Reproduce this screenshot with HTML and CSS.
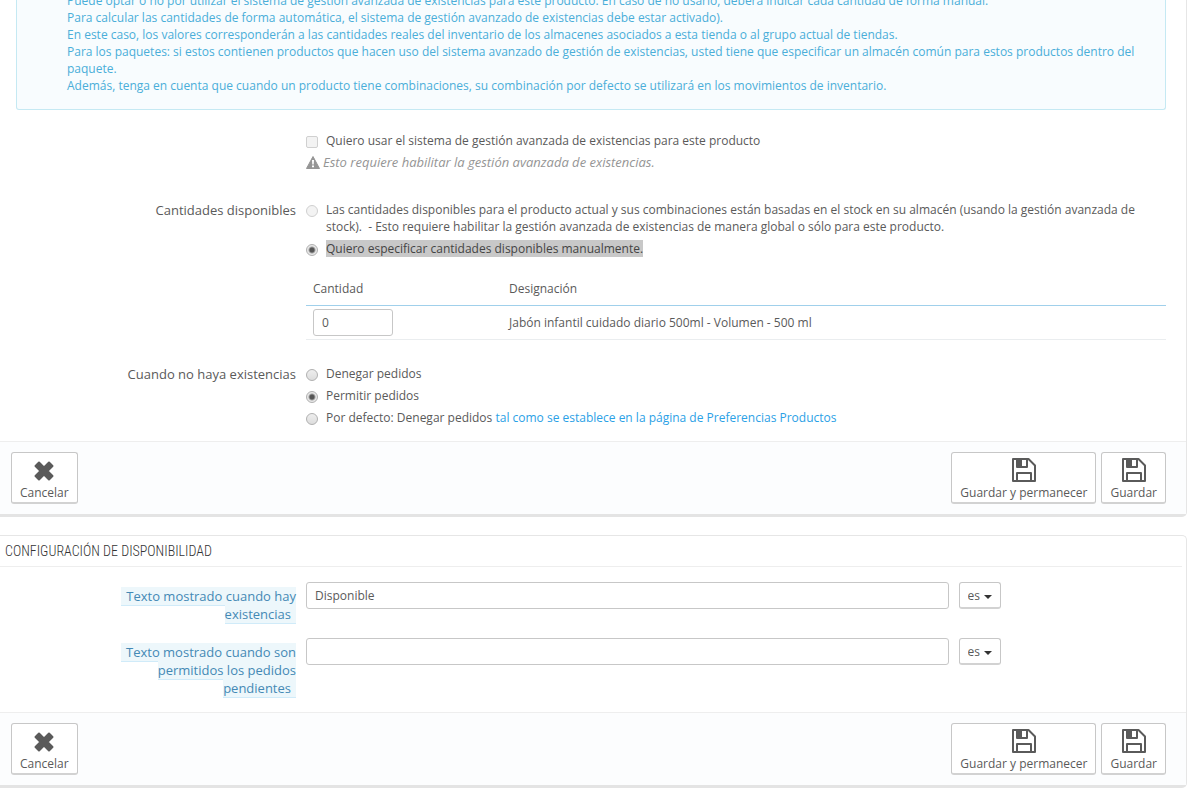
FILE: index.html
```html
<!DOCTYPE html>
<html lang="es">
<head>
    <meta charset="UTF-8">
    <meta name="viewport" content="width=device-width, initial-scale=1.0">
    <title>Cantidades</title>
    <link rel="stylesheet" href="styles.css">
</head>
<body>
    <svg class="sprite" aria-hidden="true">
        <symbol id="icon-cancel" viewBox="0 0 20 20">
            <path d="M5 1.500 L10 6.500 L15 1.500 L18.500 5 L13.500 10 L18.500 15 L15 18.500 L10 13.500 L5 18.500 L1.500 15 L6.500 10 L1.500 5 Z" fill="currentColor" stroke="currentColor" stroke-width="2" stroke-linejoin="round"/>
        </symbol>
        <symbol id="icon-save" viewBox="0 0 24 24">
            <path d="M1 1 H16.5 L23 7.500 V23 H1 Z" fill="none" stroke="currentColor" stroke-width="2" stroke-linejoin="round"/>
            <path d="M5 1 V9 H15 V1" fill="none" stroke="currentColor" stroke-width="2" stroke-linejoin="round"/>
            <path d="M5 1 H10 V9 H5 Z" fill="currentColor"/>
            <path d="M5 23 V15 H19 V23" fill="none" stroke="currentColor" stroke-width="2" stroke-linejoin="round"/>
        </symbol>
    </svg>

    <form class="panel panel-first">
        <div class="panel-body">
            <div class="alert">
                Puede optar o no por utilizar el sistema de gestión avanzada de existencias para este producto. En caso de no usarlo, deberá indicar cada cantidad de forma manual.<br>
                Para calcular las cantidades de forma automática, el sistema de gestión avanzado de existencias debe estar activado).<br>
                En este caso, los valores corresponderán a las cantidades reales del inventario de los almacenes asociados a esta tienda o al grupo actual de tiendas.<br>
                Para los paquetes: si estos contienen productos que hacen uso del sistema avanzado de gestión de existencias, usted tiene que especificar un almacén común para estos productos dentro del paquete.<br>
                Además, tenga en cuenta que cuando un producto tiene combinaciones, su combinación por defecto se utilizará en los movimientos de inventario.
            </div>

            <div class="form-group">
                <div class="field field-offset">
                    <label class="option">
                        <input type="checkbox" disabled>
                        <span>Quiero usar el sistema de gestión avanzada de existencias para este producto</span>
                    </label>
                    <p class="help">
                        <svg class="icon-warning" viewBox="0 0 14 13" aria-hidden="true">
                            <path d="M7 0.500 L13.500 12.500 H0.500 Z" fill="currentColor" stroke="currentColor" stroke-linejoin="round"/>
                            <path d="M6 4 H8 L7.700 8.500 H6.300 Z M6 9.500 H8 V11.300 H6 Z" fill="#fff"/>
                        </svg>
                        Esto requiere habilitar la gestión avanzada de existencias.
                    </p>
                </div>
            </div>

            <div class="form-group" role="radiogroup" aria-labelledby="lblCantidades">
                <span class="control-label" id="lblCantidades">Cantidades disponibles</span>
                <div class="field">
                    <label class="option">
                        <input type="radio" name="depends" disabled>
                        <span>Las cantidades disponibles para el producto actual y sus combinaciones están basadas en el stock en su almacén (usando la gestión avanzada de stock). &nbsp;- Esto requiere habilitar la gestión avanzada de existencias de manera global o sólo para este producto.</span>
                    </label>
                    <label class="option">
                        <input type="radio" name="depends" checked>
                        <span class="selected">Quiero especificar cantidades disponibles manualmente.</span>
                    </label>
                </div>
            </div>

            <div class="form-group">
                <div class="field field-offset">
                    <table class="table">
                        <thead>
                            <tr>
                                <th class="col-qty">Cantidad</th>
                                <th>Designación</th>
                            </tr>
                        </thead>
                        <tbody>
                            <tr>
                                <td><input class="form-control qty" type="text" value="0" aria-label="Cantidad"></td>
                                <td>Jabón infantil cuidado diario 500ml - Volumen - 500 ml</td>
                            </tr>
                        </tbody>
                    </table>
                </div>
            </div>

            <div class="form-group" role="radiogroup" aria-labelledby="lblExistencias">
                <span class="control-label" id="lblExistencias">Cuando no haya existencias</span>
                <div class="field">
                    <label class="option">
                        <input type="radio" name="stock">
                        <span>Denegar pedidos</span>
                    </label>
                    <label class="option">
                        <input type="radio" name="stock" checked>
                        <span>Permitir pedidos</span>
                    </label>
                    <label class="option">
                        <input type="radio" name="stock">
                        <span>Por defecto: Denegar pedidos <a href="#">tal como se establece en la página de Preferencias Productos</a></span>
                    </label>
                </div>
            </div>
        </div>

        <div class="panel-footer">
            <button type="button" class="btn btn-cancel"><svg><use href="#icon-cancel"/></svg>Cancelar</button>
            <button type="button" class="btn btn-save"><svg><use href="#icon-save"/></svg>Guardar y permanecer</button>
            <button type="button" class="btn btn-save"><svg><use href="#icon-save"/></svg>Guardar</button>
        </div>
    </form>

    <form class="panel">
        <h3>Configuración de disponibilidad</h3>
        <div class="panel-body">
            <div class="form-group">
                <label class="control-label label-narrow" for="textoStock"><span class="tooltip">Texto mostrado cuando hay existencias</span></label>
                <div class="field lang-row">
                    <input class="form-control" id="textoStock" type="text" value="Disponible">
                    <div class="lang">
                        <select aria-label="Idioma"><option>es</option></select>
                        <span class="caret"></span>
                    </div>
                </div>
            </div>
            <div class="form-group">
                <label class="control-label label-narrow" for="textoPedido"><span class="tooltip">Texto mostrado cuando son permitidos los pedidos pendientes</span></label>
                <div class="field lang-row">
                    <input class="form-control" id="textoPedido" type="text">
                    <div class="lang">
                        <select aria-label="Idioma"><option>es</option></select>
                        <span class="caret"></span>
                    </div>
                </div>
            </div>
        </div>

        <div class="panel-footer">
            <button type="button" class="btn btn-cancel"><svg><use href="#icon-cancel"/></svg>Cancelar</button>
            <button type="button" class="btn btn-save"><svg><use href="#icon-save"/></svg>Guardar y permanecer</button>
            <button type="button" class="btn btn-save"><svg><use href="#icon-save"/></svg>Guardar</button>
        </div>
    </form>
</body>
</html>
```
FILE: styles.css
```css
* {
  box-sizing: border-box;
}

body {
  margin: 0;
  padding-right: 7px;
  overflow-x: hidden;
  background: #fff;
  color: #5a5a5a;
  font-family: "Open Sans", "Noto Sans", sans-serif;
  font-size: 12px;
  line-height: 17px;
}

a {
  color: #2ba1e6;
  text-decoration: none;
}

input,
select,
button {
  font: inherit;
  color: inherit;
}

.sprite {
  display: none;
}

/* panels */
.panel {
  margin-bottom: 18px;
  border: 1px solid #e6e6e6;
  border-left: 0;
  border-bottom: 3px solid #e4e4e4;
  border-radius: 0 5px 5px 0;
}

.panel:last-child {
  margin-bottom: 0;
}

.panel-first {
  border-top: 0;
}

.panel-body {
  padding: 0 20px 0 16px;
}

.panel h3 {
  margin: 0 4px 15px 0;
  padding: 0 5px;
  border-bottom: 1px solid #eee;
  color: #333;
  font-family: "Ubuntu Condensed", "Roboto Condensed", "Open Sans Condensed", "Liberation Sans Narrow", "Open Sans", sans-serif;
  font-size: 14px;
  font-weight: 300;
  line-height: 30px;
  text-transform: uppercase;
}

.panel-footer {
  display: flex;
  gap: 5px;
  padding: 10px 20px 10px 11px;
  border-top: 1px solid #eee;
  background: #fcfdfe;
}

.alert {
  margin-top: -8px;
  margin-bottom: 22px;
  padding: 0 20px 15px 50px;
  border: 1px solid #c5e9f3;
  border-top: 0;
  border-radius: 0 0 3px 3px;
  background: #f8fcfe;
  color: #4aaed9;
}

/* form rows */
.form-group {
  display: grid;
  grid-template-columns: repeat(12, 1fr);
  column-gap: 10px;
  margin-bottom: 15px;
}

.control-label {
  grid-column: span 3;
  font-size: 13px;
  line-height: 18px;
  text-align: right;
}

.label-narrow {
  grid-column: 2 / span 2;
  padding-top: 5px;
}

.field {
  grid-column: span 9;
}

.field-offset {
  grid-column: 4 / span 9;
}

.option {
  display: flex;
  gap: 8px;
  margin-bottom: 5px;
}

.option:last-child {
  margin-bottom: 0;
}

.option input {
  appearance: none;
  flex: none;
  width: 12px;
  height: 12px;
  margin: 4px 0 0;
  border: 1px solid #b0b0b0;
  border-radius: 2px;
  background: linear-gradient(#eee, #ddd);
}

.option input[type="radio"] {
  border-radius: 50%;
}

.option input:checked {
  background: radial-gradient(circle, #555 0 2px, #e8e8e8 4px);
}

.option input:disabled {
  border-color: #d0d0d0;
  background: #f3f3f3;
}

.selected {
  background: #c8c8c8;
  color: #444;
}

.help {
  display: flex;
  align-items: center;
  gap: 3px;
  margin: 0 0 15px;
  color: #959595;
  font-size: 13px;
  font-style: italic;
}

.icon-warning {
  width: 14px;
  height: 13px;
}

.form-control {
  width: 100%;
  height: 27px;
  padding: 0 8px;
  border: 1px solid #c7c7c7;
  border-radius: 3px;
  background: #fff;
}

.qty {
  display: block;
  width: 80px;
}

.table {
  width: 100%;
  margin: 5px 0 10px;
  border-collapse: collapse;
}

.table th {
  height: 28px;
  padding: 0 7px 5px;
  border-bottom: 1px solid #a0d0eb;
  font-weight: 400;
  text-align: left;
}

.table td {
  padding: 3px 7px;
  border-bottom: 1px solid #eaedef;
}

.table .col-qty {
  width: 196px;
}

.tooltip {
  padding: 0 5px;
  border-bottom: 1px solid #d0ebf9;
  background: #edf7fb;
  color: #4489b5;
}

.lang-row {
  display: grid;
  grid-template-columns: repeat(12, 1fr);
  column-gap: 10px;
}

.lang-row .form-control {
  grid-column: span 9;
}

.lang {
  position: relative;
  width: 42px;
}

.lang select {
  appearance: none;
  width: 100%;
  height: 27px;
  padding: 1px 8px 0;
  border: 1px solid #c7c7c7;
  border-bottom: 2px solid #d2d2d2;
  border-radius: 3px;
  background: #fff;
}

.caret {
  position: absolute;
  top: 13px;
  right: 9px;
  border: 4px solid transparent;
  border-top-color: #333;
  border-bottom: 0;
  pointer-events: none;
}

/* buttons */
.btn {
  display: flex;
  flex-direction: column;
  align-items: center;
  justify-content: flex-end;
  height: 52px;
  padding: 0 8px 1px;
  border: 1px solid #c7c7c7;
  border-bottom: 2px solid #d2d2d2;
  border-radius: 3px;
  background: #fff;
}

.btn svg {
  width: 24px;
  height: 24px;
  margin-bottom: 2px;
}

.btn-cancel {
  margin-right: auto;
}

.btn-cancel svg {
  width: 20px;
  height: 20px;
  margin-bottom: 3px;
}
```
